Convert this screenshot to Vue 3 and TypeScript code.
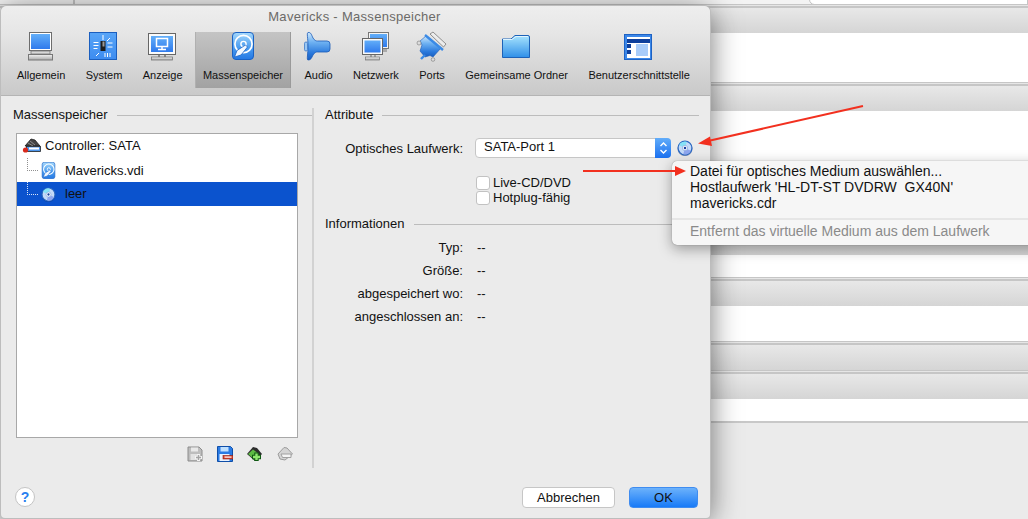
<script setup lang="ts">
const bands: string[] = ['top', 'lines', 'grad', 'w49', 'lines', 'grad', 'w115', 'lines', 'grad', 'w22', 'lines', 'grad', 'w35', 'lines', 'grad', 'lines', 'grad', 'w22', 'edge']
const infos: { label: string; value: string }[] = [
  { label: 'Typ:', value: '--' },
  { label: 'Größe:', value: '--' },
  { label: 'abgespeichert wo:', value: '--' },
  { label: 'angeschlossen an:', value: '--' }
]
const hostDrive = "Hostlaufwerk 'HL-DT-ST DVDRW  GX40N'"
</script>

<template>
  <div class="page">
    <svg class="defs" width="0" height="0" aria-hidden="true">
      <defs>
        <linearGradient id="blue" x1="0" y1="0" x2="0" y2="1"><stop offset="0" stop-color="#a6d9fc" /><stop offset=".55" stop-color="#4b9df0" /><stop offset="1" stop-color="#2478e4" /></linearGradient>
        <linearGradient id="screen" x1="0" y1="0" x2="0" y2="1"><stop offset="0" stop-color="#62aef9" /><stop offset="1" stop-color="#2f7aec" /></linearGradient>
        <linearGradient id="chip" x1="0" y1="0" x2="0" y2="1"><stop offset="0" stop-color="#58a5f7" /><stop offset="1" stop-color="#3d8cf0" /></linearGradient>
        <linearGradient id="folder" x1="0" y1="0" x2="0" y2="1"><stop offset="0" stop-color="#a8e4fe" /><stop offset="1" stop-color="#2f8fe8" /></linearGradient>
        <linearGradient id="horn" x1="0" y1="0" x2="0" y2="1"><stop offset="0" stop-color="#cfe8fc" /><stop offset=".35" stop-color="#6fb2f2" /><stop offset=".75" stop-color="#2a79dc" /><stop offset="1" stop-color="#1a5fc0" /></linearGradient>
        <linearGradient id="metal" x1="0" y1="0" x2="0" y2="1"><stop offset="0" stop-color="#f4f4f4" /><stop offset="1" stop-color="#a9a9a9" /></linearGradient>
        <symbol id="hdd" viewBox="0 0 22 28">
          <rect x=".5" y=".5" width="21" height="27" rx="3.5" fill="url(#blue)" stroke="#1a62c4" />
          <circle cx="11.5" cy="12" r="8.6" fill="none" stroke="#fff" stroke-width="1.7" />
          <circle cx="11.5" cy="12" r="2.6" fill="none" stroke="#fff" stroke-width="1.4" />
          <path d="M2.5 25 L5 18.5 L13.5 13 L15.5 15 L9 23 Z" fill="#f2f8ff" stroke="#1a62c4" stroke-width=".8" />
        </symbol>
        <symbol id="cd" viewBox="0 0 18 18">
          <circle cx="9" cy="9.8" r="8.4" fill="#12357e" opacity=".45" />
          <circle cx="9" cy="9" r="7.8" fill="#c4daf8" stroke="#2a68c2" stroke-width="1.4" />
          <path d="M9 9 L2.4 6 A7.2 7.2 0 0 1 11 2 Z" fill="#86e2f6" />
          <path d="M9 9 L15.6 12 A7.2 7.2 0 0 1 7 16 Z" fill="#8ea6ee" />
          <circle cx="9" cy="9" r="3" fill="#f8faff" stroke="#6c94d4" stroke-width=".6" />
          <circle cx="9" cy="9" r="1.4" fill="#17409e" />
        </symbol>
      </defs>
    </svg>

    <div class="desk">
      <div v-for="(b, i) in bands" :key="i" :class="['band', b]"><i v-if="b === 'top'" class="field"></i><i v-if="b === 'top'" class="rule"></i></div>
    </div>

    <section class="dialog">
      <header class="head">
        <div class="title">Mavericks - Massenspeicher</div>
        <nav class="tools">
          <div class="tool">
            <svg class="ticon" viewBox="0 0 32 32">
              <rect x="4.5" y="2.5" width="22" height="18" fill="#fff" stroke="#6d6d6d" />
              <rect x="6" y="4" width="19" height="15" fill="url(#screen)" />
              <path d="M6 21h19v3H6z" fill="#d8d8d8" stroke="#777" stroke-width=".8" />
              <rect x="3.5" y="24.5" width="24" height="5.5" fill="url(#metal)" stroke="#777" />
            </svg>
            <span>Allgemein</span>
          </div>
          <div class="tool">
            <svg class="ticon" viewBox="0 0 32 32">
              <rect x="1.5" y="2.5" width="27" height="27" fill="url(#chip)" stroke="#1b5fbf" />
              <rect x="12.5" y="11" width="5" height="10" fill="#1d1d1d" />
              <rect x="14.5" y="11.5" width="2" height="5" fill="#999" />
              <path d="M15 5v5M5.5 12.5h5M5.5 15.5h5M5.5 18.5h4M19.5 13h5M19.5 17h5M8 26l3-3M22 8l-3 3" stroke="#fff" stroke-width="1" fill="none" />
              <path d="M17 23v4M19.5 23v4M22 23v4" stroke="#fff" stroke-width="1" />
            </svg>
            <span>System</span>
          </div>
          <div class="tool">
            <svg class="ticon" viewBox="0 0 32 32">
              <rect x="1.5" y="3.5" width="27" height="21" fill="#fbfbfb" stroke="#666" />
              <rect x="4" y="6" width="22" height="16" fill="url(#screen)" />
              <path d="M9.5 8.5h11v8h-11z" fill="none" stroke="#fff" stroke-width="1.5" />
              <path d="M15 16.5v2.5M11 19.5h8" stroke="#fff" stroke-width="1.5" />
              <path d="M12 25v2M18 25v2" stroke="#888" stroke-width="2" />
              <rect x="4.5" y="27" width="21" height="3" fill="url(#metal)" stroke="#777" stroke-width=".8" />
            </svg>
            <span>Anzeige</span>
          </div>
          <div class="tool active">
            <svg class="ticon" viewBox="0 0 32 32"><use href="#hdd" x="5" y="2" width="22" height="28" /></svg>
            <span>Massenspeicher</span>
          </div>
          <div class="tool">
            <svg class="ticon" viewBox="0 0 32 32">
              <path d="M6 2.5 C9 2 9.5 5 11 8 C12.5 10.5 14 11 15.5 11 L25 11 Q28 11 28 14 L28 19 Q28 22 25 22 L15.5 22 C14 22 12.5 22.5 11 25 C9.5 28 9 30 6 30 C4.5 30 6 24 6 16 C6 8 4.5 3 6 2.5Z" fill="url(#horn)" stroke="#1a5ab8" stroke-width=".8" />
              <rect x="2.5" y="12" width="3" height="9" rx="1.4" fill="#9cc8f2" stroke="#2e6fc4" stroke-width=".7" />
            </svg>
            <span>Audio</span>
          </div>
          <div class="tool">
            <svg class="ticon" viewBox="0 0 32 32">
              <rect x="8.5" y="2.5" width="20" height="16" fill="#f4f4f4" stroke="#777" />
              <rect x="10" y="4" width="17" height="13" fill="url(#screen)" />
              <rect x="2.5" y="8.5" width="20" height="16" fill="#fafafa" stroke="#666" />
              <rect x="4.5" y="10.5" width="16" height="12" fill="url(#screen)" />
              <path d="M11 25v2M15 25v2" stroke="#888" stroke-width="1.4" />
              <rect x="5.5" y="27" width="14" height="3" fill="url(#metal)" stroke="#777" stroke-width=".7" />
              <rect x="23" y="19" width="4" height="3" fill="#aaa" />
            </svg>
            <span>Netzwerk</span>
          </div>
          <div class="tool">
            <svg class="ticon" viewBox="0 0 32 32">
              <path d="M14 4 L17 2 L30 14 L27.5 17 Z" fill="#ececec" stroke="#777" stroke-width=".8" />
              <path d="M10 6 L4 11 L6 15 L4 21 L9 27 L14 25.5 L17 27 L25 18 Z" fill="url(#horn)" stroke="#1a5ab8" stroke-width=".6" />
              <path d="M9 5 L27 20" stroke="#3a8ae6" stroke-width="2.4" />
              <path d="M9 25 L5 29" stroke="#3a8ae6" stroke-width="2.4" />
              <circle cx="3" cy="13" r="2" fill="#dcdcdc" stroke="#777" stroke-width=".6" />
              <circle cx="17" cy="29.5" r="1.8" fill="#dcdcdc" stroke="#777" stroke-width=".6" />
            </svg>
            <span>Ports</span>
          </div>
          <div class="tool">
            <svg class="ticon" viewBox="0 0 32 32">
              <path d="M1.5 9 L1.5 27.5 L28.5 27.5 L28.5 7 Q28.5 5.5 27 5.5 L14 5.5 L10 9 Z" fill="url(#folder)" stroke="#1d62b8" />
              <path d="M2 9.5 H11 L15 6.5 H27" fill="none" stroke="#dff4ff" stroke-width="1" />
            </svg>
            <span>Gemeinsame Ordner</span>
          </div>
          <div class="tool">
            <svg class="ticon" viewBox="0 0 32 32">
              <rect x="1.5" y="4.5" width="27" height="25" fill="#3b87e8" stroke="#1d62c4" />
              <rect x="4" y="7" width="23" height="21" fill="#fff" />
              <rect x="4" y="9" width="23" height="4" fill="#0d3f9c" />
              <rect x="4" y="14" width="4" height="4" fill="#0d3f9c" />
              <rect x="4" y="20" width="4" height="4" fill="#0d3f9c" />
              <rect x="13" y="14" width="12" height="12" fill="#a8ccfa" />
            </svg>
            <span>Benutzerschnittstelle</span>
          </div>
        </nav>
      </header>

      <div class="main">
        <div class="left">
          <div class="sec"><span>Massenspeicher</span><i></i></div>
          <div class="tree">
            <div class="row">
              <svg class="ctrl" width="20" height="18" viewBox="0 0 20 18">
                <path d="M3 9 L9 2 L13 3 L18 9 Z" fill="#444" stroke="#111" stroke-width=".7" />
                <path d="M8 4l5 4M6 6l5 3" stroke="#aaa" stroke-width=".7" />
                <rect x="4.5" y="9.5" width="14" height="5" fill="#4d95ea" stroke="#222" stroke-width=".8" />
                <rect x="7" y="10.5" width="10" height="2" fill="#fff" />
                <circle cx="3.5" cy="13" r="2.6" fill="#d9291c" />
              </svg>
              <span>Controller: SATA</span>
            </div>
            <div class="row child">
              <i class="branch"></i>
              <svg class="leaf" width="15" height="17"><use href="#hdd" width="15" height="17" /></svg>
              <span>Mavericks.vdi</span>
            </div>
            <div class="row child sel">
              <i class="branch"></i>
              <svg class="leaf" width="15" height="15"><use href="#cd" width="15" height="15" /></svg>
              <span>leer</span>
            </div>
          </div>
          <div class="actions">
            <svg width="16" height="16" viewBox="0 0 16 16">
              <path d="M1 1h11l3 3v11H1z" fill="#bdbdbd" stroke="#8c8c8c" />
              <rect x="4" y="1.5" width="7" height="4" fill="#e9e9e9" />
              <rect x="3.5" y="8" width="7" height="6" fill="#e2e2e2" />
              <path d="M11.5 8v7M8 11.5h7" stroke="#f3f3f3" stroke-width="3" />
              <path d="M11.5 9v5M9 11.5h5" stroke="#a4a4a4" stroke-width="1.4" />
            </svg>
            <svg width="16" height="16" viewBox="0 0 16 16">
              <path d="M.5.5h13l2 2v13H.5z" fill="#2a7be4" stroke="#0f4ea8" />
              <rect x="3.5" y="1" width="8" height="4.5" fill="#bfe0ff" />
              <rect x="2.5" y="8" width="10" height="7" fill="#e8f2ff" />
              <rect x="6" y="9.5" width="10" height="3.5" fill="#d6402c" stroke="#8e1c10" stroke-width=".6" />
              <rect x="7.5" y="10.5" width="7" height="1.2" fill="#fff" />
            </svg>
            <svg width="16" height="16" viewBox="0 0 16 16">
              <path d="M0 8 L6 1 L10 2 L15 8 L8 15 Z" fill="#2c2c2c" />
              <path d="M1 8 L6 3.5 L12 8 L8 14 Z" fill="#5dbb44" />
              <path d="M9.5 6.5v8.5M5 11h9" stroke="#0e5a12" stroke-width="4.4" />
              <path d="M9.5 7.5v6.5M6 11h7" stroke="#8fe66d" stroke-width="2.4" />
            </svg>
            <svg width="16" height="16" viewBox="0 0 16 16">
              <path d="M1 8 L7 1.5 L10 2 L15.5 8 L8 14 L3 13 Z" fill="#d4d4d4" stroke="#9c9c9c" />
              <path d="M4 8h10v3.5H5.5z" fill="#f4f4f4" stroke="#a0a0a0" />
            </svg>
          </div>
        </div>
        <i class="divider"></i>
        <div class="right">
          <div class="sec"><span>Attribute</span><i></i></div>
          <div class="form">
            <label class="lbl">Optisches Laufwerk:</label>
            <div class="select">
              <span>SATA-Port 1</span>
              <b class="step">
                <svg width="9" height="14" viewBox="0 0 9 14"><path d="M1.5 5 L4.5 2 L7.5 5M1.5 9 L4.5 12 L7.5 9" fill="none" stroke="#fff" stroke-width="1.4" /></svg>
              </b>
            </div>
            <svg class="cdbtn" width="16" height="16"><use href="#cd" width="16" height="16" /></svg>
          </div>
          <div class="checks">
            <div class="check"><i></i><span>Live-CD/DVD</span></div>
            <div class="check"><i></i><span>Hotplug-fähig</span></div>
          </div>
          <div class="sec info"><span>Informationen</span><i></i></div>
          <div v-for="r in infos" :key="r.label" class="irow">
            <span class="lbl">{{ r.label }}</span><span class="val">{{ r.value }}</span>
          </div>
        </div>
      </div>

      <footer class="foot">
        <button class="help">?</button>
        <span class="spacer"></span>
        <button class="btn">Abbrechen</button>
        <button class="btn ok">OK</button>
      </footer>
    </section>

    <div class="menu">
      <div class="mi">Datei für optisches Medium auswählen...</div>
      <div class="mi">{{ hostDrive }}</div>
      <div class="mi">mavericks.cdr</div>
      <div class="msep"></div>
      <div class="mi off">Entfernt das virtuelle Medium aus dem Laufwerk</div>
    </div>

    <svg class="arrows" width="1028" height="519" viewBox="0 0 1028 519">
      <path d="M863 106 L708 141" stroke="#f2301f" stroke-width="2" fill="none" />
      <path d="M698 143.5 L710 136.5 L712 146 Z" fill="#f2301f" />
      <path d="M583 171 L676 171" stroke="#f2301f" stroke-width="2" fill="none" />
      <path d="M686 171 L675 166 L675 176 Z" fill="#f2301f" />
    </svg>
  </div>
</template>

<style>
html, body { margin: 0; background: #ebebeb; }
</style>

<style scoped>
.page { position: relative; width: 1028px; height: 519px; overflow: hidden; font-family: "Liberation Sans", Arial, sans-serif; font-size: 13px; color: #111; }
.defs { position: absolute; }
.desk { display: flex; flex-direction: column; height: 519px; background: #ebebeb; }
.band { flex: none; position: relative; }
.top { height: 4px; background: #f3f3f3; }
.field { position: absolute; left: 809px; right: 0; top: -6px; height: 9px; background: #fff; border: 1px solid #c4c4c4; border-radius: 6px 0 0 6px; }
.rule { position: absolute; left: 73px; top: 0; width: 2px; height: 4px; background: #c4c4c4; }
.lines { height: 4px; background: linear-gradient(#c6c6c6 0 1.5px, #e6e6e6 1.5px 2.5px, #c6c6c6 2.5px); }
.grad { height: 25px; background: linear-gradient(#e8e8e8, #d5d5d5); }
.w49 { height: 49px; background: #fff; }
.w115 { height: 115px; background: #fff; }
.w22 { height: 22px; background: #fff; }
.w35 { height: 35px; background: #fff; }
.edge { height: 2px; background: #c8c8c8; }

.dialog { position: absolute; left: 1px; top: 6px; width: 709px; height: 512px; display: flex; flex-direction: column; background: #ebebeb; border-radius: 6px 6px 4px 4px; box-shadow: 0 0 0 1px #bdbdbd, 0 4px 30px rgba(0, 0, 0, .55); }
.head { height: 90px; box-sizing: border-box; border-bottom: 1px solid #b4b4b4; background: linear-gradient(#eeeeee, #e6e6e6 30%, #c9c9c9); border-radius: 6px 6px 0 0; }
.title { height: 26px; line-height: 22px; text-align: center; color: #6c6a68; font-size: 13px; letter-spacing: .3px; padding-right: 2px; }
.tools { display: flex; gap: .4px; padding-left: 6px; height: 56px; }
.tool { padding: 0 10px; display: flex; flex-direction: column; align-items: center; font-size: 11px; color: #111; }
.tool span { line-height: 14px; margin-top: 6px; white-space: nowrap; }
.tool.active { background: linear-gradient(#c4c4c4, #a2a2a2); box-shadow: inset 1px 0 #b0b0b0, inset -1px 0 #9a9a9a; margin: 0 3px 0 2px; padding: 0 8px; }
.ticon { width: 32px; height: 32px; margin: -2px -10px 0; display: block; flex: none; }

.main { display: flex; padding-top: 10px; height: 372px; box-sizing: border-box; }
.left { width: 297px; padding-left: 15px; box-sizing: content-box; display: flex; flex-direction: column; }
.sec { display: flex; align-items: center; height: 16px; margin-left: -3px; gap: 9px; font-size: 13px; flex: none; }
.sec i { flex: 1; height: 1px; background: #bcbcbc; margin-top: 2px; }
.tree { flex: none; margin-top: 11px; width: 280px; height: 303px; background: #fff; border: 1px solid #a8a8a8; }
.row { position: relative; height: 24px; display: flex; align-items: center; font-size: 13px; color: #111; }
.row:first-child span, .sel span { margin-top: -2px; }
.ctrl { margin: 0 3px 0 5px; flex: none; }
.child { padding-left: 24px; }
.leaf { flex: none; margin-right: 9px; }
.sel { background: #0b53ce; }
.branch { position: absolute; left: 10px; top: 0; bottom: 11px; width: 10px; border-left: 1px dotted #8f8f8f; border-bottom: 1px dotted #8f8f8f; }
.sel .branch { border-color: #d8e4f8; }
.actions { display: flex; justify-content: flex-end; gap: 14px; margin-top: 8px; width: 277px; flex: none; }
.divider { width: 2px; height: 360px; background: #d2d2d2; flex: none; margin: 2px 11px 0 -1px; }
.right { flex: 1; padding-right: 11px; display: flex; flex-direction: column; }
.right .sec { margin-left: 0; }
.form { display: flex; align-items: center; height: 20px; margin-top: 16px; }
.lbl { width: 138px; text-align: right; flex: none; white-space: nowrap; }
.select { margin-left: 12px; width: 196px; height: 20px; box-sizing: border-box; border: 1px solid #c6c6c6; border-radius: 4px; background: #fff; display: flex; align-items: center; padding-left: 8px; position: relative; line-height: 16px; }
.select span { flex: 1; margin-top: -2px; }
.step { width: 16px; align-self: stretch; margin: -1px -1px -1px 0; border-radius: 0 4px 4px 0; background: linear-gradient(#62adfa, #1a70f0); display: flex; align-items: center; justify-content: center; }
.cdbtn { margin-left: 6px; margin-top: 0; flex: none; }
.checks { margin: 18px 0 0 151px; display: flex; flex-direction: column; gap: 1px; }
.check { display: flex; align-items: center; height: 14px; gap: 3px; }
.check i { width: 14px; height: 14px; box-sizing: border-box; border: 1px solid #c2c2c2; border-radius: 3px; background: #fff; }
.check span { margin-top: -2px; }
.sec.info { margin-top: 10px; }
.irow { display: flex; height: 23px; align-items: center; }
.sec.info + .irow { margin-top: 5px; }
.val { margin-left: 14px; }
.foot { flex: 1; display: flex; align-items: flex-start; padding: 19px 12px 0 14px; gap: 14px; }
.spacer { flex: 1; }
.help { width: 20px; height: 20px; padding: 0; border-radius: 50%; border: 1px solid #c4c4c4; background: #fff; color: #2a7fef; font: bold 14px "Liberation Sans", sans-serif; }
.btn { width: 93px; height: 21px; padding: 0; box-sizing: border-box; border: 1px solid #c6c6c6; border-radius: 4px; background: #fff; color: #111; font: 13px "Liberation Sans", sans-serif; }
.btn.ok { width: 69px; border: 1px solid #3f8cf0; background: linear-gradient(#6cb2fb, #187af7); }

.menu { position: absolute; left: 672px; top: 161px; width: 400px; height: 84px; box-sizing: border-box; padding-top: 2px; background: #f6f6f6; border-radius: 5px; box-shadow: 0 0 1px rgba(0,0,0,.5), 0 4px 14px rgba(0, 0, 0, .35); font-size: 14px; }
.mi { height: 16px; line-height: 16px; padding-left: 18px; white-space: pre; color: #111; }
.msep { height: 2px; background: #e6e6e6; margin: 7px 0 3px; }
.off { color: #8a8a8a; }
.arrows { position: absolute; left: 0; top: 0; pointer-events: none; }
</style>
